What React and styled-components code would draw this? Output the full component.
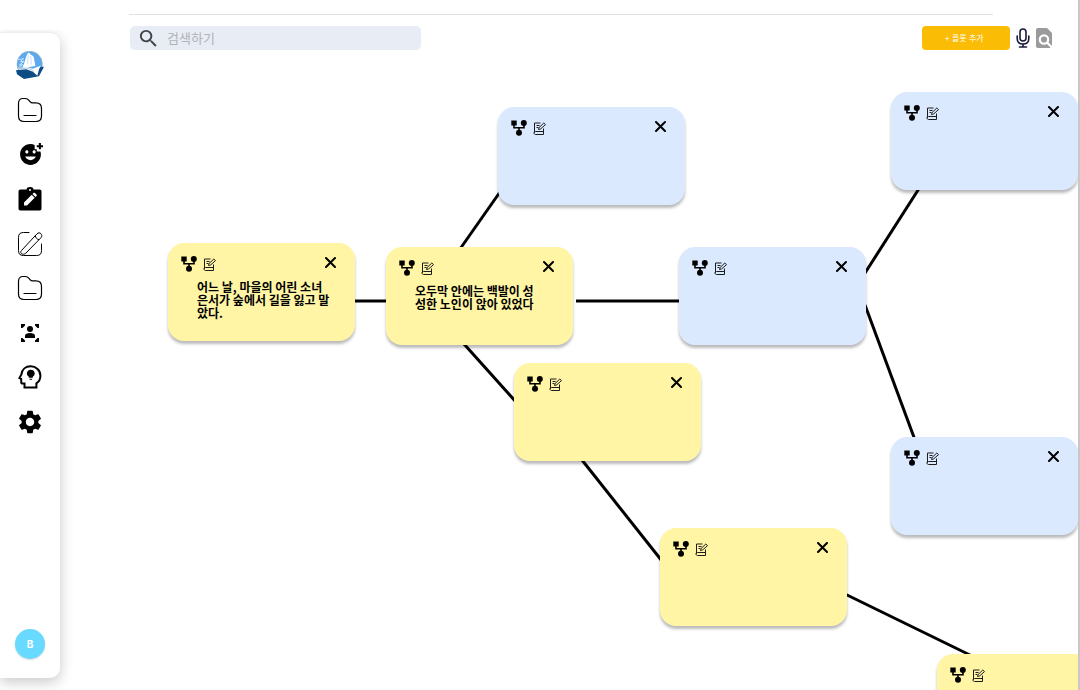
import React, { useState } from "react";
import styled, { createGlobalStyle } from "styled-components";
import { MdAddReaction, MdSettings, MdSearch } from "react-icons/md";

const GlobalStyle = createGlobalStyle`
  * { box-sizing: border-box; }
  body {
    margin: 0;
    background: #fff;
    color: #000;
    font-family: "Noto Sans CJK KR", "Noto Sans", sans-serif;
  }
  button { padding: 0; border: 0; background: none; color: inherit; font: inherit; cursor: pointer; }
`;

const Page = styled.div`
  display: flex;
  height: 100vh;
  overflow: hidden;
`;

const Sidebar = styled.aside`
  position: relative;
  z-index: 1;
  flex: 0 0 60px;
  display: flex;
  flex-direction: column;
  align-items: center;
  justify-content: space-between;
  margin: 32px 0 12px;
  padding: 18px 0 19px;
  border-top: 1px solid #eee;
  border-radius: 0 10px 10px 0;
  box-shadow: 0 4px 14px rgba(0, 0, 0, 0.22);
  background: #fff;
  clip-path: inset(-2px -20px -20px 0);
`;

const Nav = styled.nav`
  display: flex;
  flex-direction: column;
  justify-content: space-between;
  height: 385px;
`;

const NavLink = styled.a`
  display: flex;
  align-items: center;
  justify-content: center;
  width: 28px;
  height: 28px;
  color: #000;
`;

const Avatar = styled.button`
  width: 30px;
  height: 30px;
  border-radius: 50%;
  background: #68d9ff;
  color: #fff;
  font-family: Inter, sans-serif;
  font-size: 10px;
  font-weight: 700;
  box-shadow: 0 1px 2px rgba(0, 0, 0, 0.15);
`;

const Main = styled.main`
  flex: 1;
  min-width: 0;
  display: flex;
  flex-direction: column;
  border-right: 2px solid #c8c8c8;
`;

const Rule = styled.hr`
  align-self: stretch;
  height: 1px;
  margin: 14px 85px 11px 69px;
  border: 0;
  background: #e0e0e0;
`;

const Toolbar = styled.header`
  display: flex;
  align-items: center;
  justify-content: space-between;
  height: 24px;
  padding: 0 26px 0 70px;
`;

const SearchBox = styled.label`
  display: flex;
  align-items: center;
  gap: 7px;
  width: 291px;
  height: 24px;
  padding: 0 7px;
  border-radius: 5px;
  background: #e8ecf5;
  color: #404345;
`;

const SearchInput = styled.input`
  flex: 1;
  min-width: 0;
  height: 24px;
  padding: 0 0 2px;
  border: 0;
  outline: 0;
  background: none;
  font-family: "Noto Sans CJK KR", sans-serif;
  font-size: 13px;
  &::placeholder { color: #b1b3b6; opacity: 1; }
`;

const Actions = styled.div`
  display: flex;
  align-items: center;
  gap: 6px;
`;

const AddButton = styled.button`
  width: 88px;
  height: 24px;
  padding-right: 4px;
  border-radius: 4px;
  background: #fbbc05;
  color: #fff;
  font-family: Inter, "Noto Sans CJK KR", sans-serif;
  font-size: 8px;
  line-height: 24px;
`;

const IconButton = styled.button`
  display: flex;
  align-items: center;
  justify-content: center;
`;

const Canvas = styled.section`
  position: relative;
  flex: 1;
  min-height: 0;
  overflow: hidden;
`;

const Links = styled.svg`
  position: absolute;
  inset: 0;
  width: 100%;
  height: 100%;
`;

const Card = styled.article`
  position: absolute;
  left: ${(p) => p.$x}px;
  top: ${(p) => p.$y}px;
  width: 187px;
  height: 98px;
  padding: 13px 19px 0 13px;
  border-radius: 16px;
  background: ${(p) => (p.$tone === "yellow" ? "#fff5a5" : "#dbe9ff")};
  box-shadow: 0 3px 3px rgba(0, 0, 0, 0.27);
`;

const CardHead = styled.div`
  display: flex;
  align-items: center;
  gap: 6px;
  height: 16px;
`;

const CloseButton = styled(IconButton)`
  align-self: flex-start;
  margin: 1px 0 0 auto;
`;

const CardText = styled.p`
  margin: 8px 0 0 16px;
  font-size: 12px;
  font-weight: 700;
  line-height: 13px;
  white-space: pre;
`;

const Logo = () => (
  <svg width="28" height="28" viewBox="0 0 84 84">
    <circle cx="41" cy="39" r="38" fill="#5ba9ef" stroke="#93a9bd" strokeWidth="2" />
    <path d="M6 26l17-3-10 9 11-1-14 11 10-1-13 9" fill="none" stroke="#c8e4ff" strokeWidth="3" />
    <path d="M36 5c5 0 8 3 9 7 4 1 8 4 9 9l4 24-34 5-4-3c7-11 8-29 16-42z" fill="#fff" />
    <path d="M37 11l-2 29M44 14l2 27" stroke="#a9cff2" strokeWidth="2" />
    <path d="M60 13l9 13 5 14-13 5z" fill="#5ba9ef" />
    <path d="M5 52l27-5 18 6 24-9-9 23-35 7z" fill="#fff" />
    <path d="M0 58l31-3 20 7 20-11 4-4h9L69 76l-45 8L3 70z" fill="#0e4c86" />
    <path d="M51 62l20-14-7 26z" fill="#fff" />
    <path d="M5 54l28-3 18 7" fill="none" stroke="#7da4c7" strokeWidth="2" />
  </svg>
);

const Folder = () => (
  <svg width="26" height="26" viewBox="0 0 26 26" fill="none" stroke="currentColor" strokeWidth="1.2">
    <path d="M1.5 6.5C1.5 3 3 1.5 6 1.5h2.2c2 0 2.8.5 3.8 1.8l1 1.3c.8 1 1.400 1.300 2.800 1.300H19c4 0 5.500 1.600 5.500 5.500v7.600c0 4-1.500 5.500-5.500 5.500H7c-4 0-5.500-1.500-5.500-5.500z" />
    <path d="M7 18.500h12" strokeLinecap="round" />
  </svg>
);

const ClipboardPen = () => (
  <svg width="24" height="24" viewBox="0 0 24 24">
    <path fill="currentColor" d="M2.500 2.500h6C8.500.8 10 0 12 0s3.500.8 3.500 2.500h6c1.400 0 2 .8 2 2v17c0 1.400-.8 2-2 2h-19c-1.400 0-2-.8-2-2v-17c0-1.300.7-2 2-2z" />
    <path d="M6 18.500v-3l7.700-7.700 3 3L9 18.500zM14.500 7l1-1c.5-.5 1-.5 1.500 0l1.500 1.500c.5.5.5 1 0 1.500l-1 1z" fill="#fff" />
    <circle cx="12" cy="3" r="1" fill="#fff" />
  </svg>
);

const Compose = () => (
  <svg width="26" height="26" viewBox="0 0 26 26" fill="none" stroke="currentColor" strokeWidth="1">
    <path d="M12 1.500H6.500C3 1.500 1.500 3 1.500 6.500v13c0 3.500 1.500 5 5 5h13c3.500 0 5-1.500 5-5V13" strokeLinecap="round" />
    <path d="M4.500 19.500L20 2.800c1.300-1.300 2.800-1.200 3.900-.1 1.200 1.200 1.300 2.800 0 4.100L8.800 22.200c-1.300 1.200-3.500 1.400-4.400.4-.9-.9-.9-2 .1-3.100zM18.200 4.800c.5 2 1.900 3.500 3.900 3.900" />
  </svg>
);

const PersonFrame = () => (
  <svg width="18" height="18" viewBox="0 0 18 18" fill="currentColor">
    <path d="M0 4V0h4v1.500L1.500 4zM14 0h4v4h-1.500L14 1.500zM0 14h1.500L4 16.500V18H0zM16.500 14H18v4h-4v-1.500z" />
    <circle cx="9" cy="5" r="3" />
    <path d="M4 14v-2c0-2.200 2.300-3 5-3s5 .8 5 3v2z" />
  </svg>
);

const HeadBulb = () => (
  <svg width="24" height="24" viewBox="0 0 24 24">
    <path d="M6.500 22.500v-4H4.800c-1 0-1.600-.6-1.600-1.600v-3L1.400 13l2-3.600C4 4.500 7.700 1.300 12.600 1.300c5.400 0 9.800 4 9.800 9.400 0 3.300-1.500 6-4 7.700v4.100z" fill="none" stroke="currentColor" strokeWidth="2" />
    <path d="M12.800 4.800c2.300 0 3.900 1.600 3.900 3.700 0 1.500-.8 2.500-1.900 3.200v1.100h-4v-1.100c-1.100-.7-1.900-1.700-1.900-3.200 0-2.100 1.600-3.700 3.900-3.700zM11.500 13.800h2.600v1h-2.600z" fill="currentColor" />
  </svg>
);

const Mic = () => (
  <svg width="14" height="20" viewBox="0 0 14 20" fill="none" stroke="#1a1a38" strokeWidth="1.600" strokeLinecap="round">
    <rect x="4" y="1" width="6" height="12" rx="3" />
    <path d="M1.200 8v2.500c0 3.500 2.500 5.500 5.800 5.500s5.800-2 5.800-5.500V8M7 16v3M3.500 19h7" />
  </svg>
);

const PageSearch = () => (
  <svg width="16" height="20" viewBox="0 0 16 20">
    <path d="M2 0h9l5 5v13l-2 2H2c-1.300 0-2-.7-2-2V2C0 .7.700 0 2 0z" fill="#9b9b9b" />
    <circle cx="8" cy="11.500" r="4.200" fill="none" stroke="#fff" strokeWidth="2.200" />
    <path d="M11 14.500l5 5" stroke="#fff" strokeWidth="2.200" />
  </svg>
);

const Branch = () => (
  <svg width="16" height="16" viewBox="0 0 16 16">
    <path d="M3 4v3.700h10V4M8 7.500V13" fill="none" stroke="#000" strokeWidth="1.600" />
    <path d="M.3.500h5.400v5H.3z" />
    <circle cx="12.800" cy="3.100" r="3" />
    <circle cx="8" cy="12.700" r="3" />
  </svg>
);

const NoteEdit = () => (
  <svg width="13" height="13" viewBox="0 0 13 13" fill="none" stroke="#1c1c1c" strokeWidth="1">
    <path d="M7.500 1H1.500v9.800M10.500 6.500v6h-8c-.9 0-1.500-.7-1.500-1.500s.6-1.500 1.500-1.500h8M3.500 3.500h3M3.500 5.500h2" />
    <path d="M5.500 7.500l.6-2L10.800 1l1.700 1.600-4.800 4.300z" />
  </svg>
);

const Cross = () => (
  <svg width="11" height="11" viewBox="0 0 11 11" stroke="#000" strokeWidth="2" strokeLinecap="round">
    <path d="M1 1l9 9M10 1l-9 9" />
  </svg>
);

const menu = [
  ["홈", <Logo />],
  ["작품", <Folder />],
  ["캐릭터 추가", <MdAddReaction size={25} />],
  ["플롯", <ClipboardPen />],
  ["글쓰기", <Compose />],
  ["보관함", <Folder />],
  ["인물", <PersonFrame />],
  ["아이디어", <HeadBulb />],
  ["설정", <MdSettings size={28} />],
];

const initialPlots = [
  { id: 1, x: 108, y: 193, tone: "yellow", text: "어느 날, 마을의 어린 소녀\n은서가 숲에서 길을 잃고 말\n았다." },
  { id: 2, x: 326, y: 197, tone: "yellow", text: "오두막 안에는 백발이 성\n성한 노인이 앉아 있었다" },
  { id: 3, x: 438, y: 57, tone: "blue" },
  { id: 4, x: 619, y: 197, tone: "blue" },
  { id: 5, x: 831, y: 42, tone: "blue" },
  { id: 6, x: 454, y: 313, tone: "yellow" },
  { id: 7, x: 831, y: 387, tone: "blue" },
  { id: 8, x: 600, y: 478, tone: "yellow" },
  { id: 9, x: 877, y: 604, tone: "yellow" },
];

const edges = [
  [290, 251, 330, 251],
  [400, 199, 440, 142],
  [516, 251, 625, 251],
  [404, 294, 456, 352],
  [805, 223, 860, 137],
  [805, 255, 855, 390],
  [522, 410, 602, 511],
  [785, 544, 912, 606],
];

export default function App() {
  const [plots, setPlots] = useState(initialPlots);
  const remove = (id) => setPlots((list) => list.filter((p) => p.id !== id));

  return (
    <Page>
      <GlobalStyle />
      <Sidebar>
        <Nav>
          {menu.map(([label, icon]) => (
            <NavLink key={label} href="#" aria-label={label}>{icon}</NavLink>
          ))}
        </Nav>
        <Avatar type="button">B</Avatar>
      </Sidebar>
      <Main>
        <Rule />
        <Toolbar>
          <SearchBox>
            <MdSearch size={23} />
            <SearchInput type="text" placeholder="검색하기" aria-label="검색하기" />
          </SearchBox>
          <Actions>
            <AddButton type="button">+ 플롯 추가</AddButton>
            <IconButton type="button" aria-label="음성 입력"><Mic /></IconButton>
            <IconButton type="button" aria-label="문서 검색"><PageSearch /></IconButton>
          </Actions>
        </Toolbar>
        <Canvas>
          <Links stroke="#000" strokeWidth="3" aria-hidden="true">
            {edges.map(([x1, y1, x2, y2]) => (
              <line key={`${x1}-${y1}-${y2}`} x1={x1} y1={y1} x2={x2} y2={y2} />
            ))}
          </Links>
          {plots.map((p) => (
            <Card key={p.id} $x={p.x} $y={p.y} $tone={p.tone}>
              <CardHead>
                <IconButton type="button" aria-label="분기 추가"><Branch /></IconButton>
                <IconButton type="button" aria-label="편집"><NoteEdit /></IconButton>
                <CloseButton type="button" aria-label="삭제" onClick={() => remove(p.id)}><Cross /></CloseButton>
              </CardHead>
              {p.text && <CardText>{p.text}</CardText>}
            </Card>
          ))}
        </Canvas>
      </Main>
    </Page>
  );
}
